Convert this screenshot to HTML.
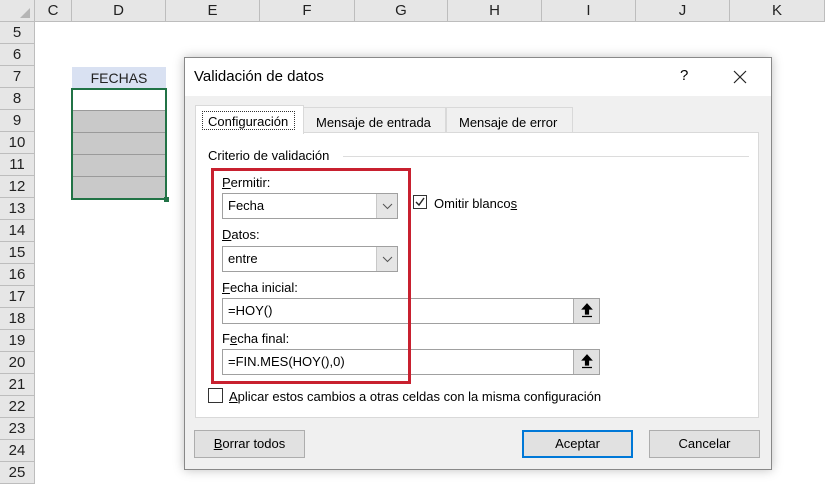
<!DOCTYPE html>
<html><head><meta charset="utf-8"><style>
*{box-sizing:border-box;margin:0;padding:0}
body{width:825px;height:487px;overflow:hidden;background:#fff;font-family:"Liberation Sans",sans-serif;position:relative;font-size:13px;color:#000}
.a{position:absolute}
.ch{position:absolute;top:0;height:22px;background:#e6e6e6;border-right:1px solid #bdbdbd;border-bottom:1px solid #bdbdbd;text-align:center;line-height:22px;font-size:15px;color:#222}
.rh{position:absolute;left:0;width:35px;height:22px;background:#e6e6e6;border-right:1px solid #bdbdbd;border-bottom:1px solid #bdbdbd;text-align:center;line-height:22px;font-size:15px;color:#222}
.lbl{position:absolute;font-size:13px}
u{text-decoration:underline}
.box{position:absolute;background:#fff;border:1px solid #a0a0a0;height:26px;line-height:24px;padding-left:5px}
.dd{position:absolute;right:0;top:0;width:21px;height:24px;background:#e5e5e5;border-left:1px solid #c8c8c8}
.btn{position:absolute;background:#e1e1e1;border:1px solid #adadad;text-align:center;line-height:26px;height:28px;width:111px}
.up{position:absolute;right:0;top:0;width:26px;height:24px;background:#e1e1e1;border-left:1px solid #adadad}
</style></head><body>
<div class="ch" style="left:0;width:35px"></div>
<div class="a" style="left:20px;top:8px;width:0;height:0;border-left:10px solid transparent;border-bottom:10px solid #b5b5b5"></div>
<div class="ch" style="left:35px;width:37px">C</div>
<div class="ch" style="left:72px;width:94px">D</div>
<div class="ch" style="left:166px;width:94px">E</div>
<div class="ch" style="left:260px;width:95px">F</div>
<div class="ch" style="left:355px;width:93px">G</div>
<div class="ch" style="left:448px;width:94px">H</div>
<div class="ch" style="left:542px;width:94px">I</div>
<div class="ch" style="left:636px;width:94px">J</div>
<div class="ch" style="left:730px;width:95px">K</div>
<div class="rh" style="top:22px">5</div><div class="rh" style="top:44px">6</div><div class="rh" style="top:66px">7</div><div class="rh" style="top:88px">8</div><div class="rh" style="top:110px">9</div><div class="rh" style="top:132px">10</div><div class="rh" style="top:154px">11</div><div class="rh" style="top:176px">12</div><div class="rh" style="top:198px">13</div><div class="rh" style="top:220px">14</div><div class="rh" style="top:242px">15</div><div class="rh" style="top:264px">16</div><div class="rh" style="top:286px">17</div><div class="rh" style="top:308px">18</div><div class="rh" style="top:330px">19</div><div class="rh" style="top:352px">20</div><div class="rh" style="top:374px">21</div><div class="rh" style="top:396px">22</div><div class="rh" style="top:418px">23</div><div class="rh" style="top:440px">24</div><div class="rh" style="top:462px">25</div>
<div class="a" style="left:72px;top:67px;width:94px;height:21px;background:#d9e1f2;text-align:center;line-height:22px;font-size:14px;color:#222">FECHAS</div>
<div class="a" style="left:72px;top:111px;width:94px;height:88px;background:#c9c9c9"></div>
<div class="a" style="left:72px;top:132px;width:94px;height:1px;background:#9a9a9a"></div>
<div class="a" style="left:72px;top:154px;width:94px;height:1px;background:#9a9a9a"></div>
<div class="a" style="left:72px;top:176px;width:94px;height:1px;background:#9a9a9a"></div>
<div class="a" style="left:72px;top:110px;width:94px;height:1px;background:#9a9a9a"></div>
<div class="a" style="left:71px;top:88px;width:96px;height:112px;border:2px solid #217346"></div>
<div class="a" style="left:164px;top:197px;width:5px;height:5px;background:#217346"></div>

<div class="a" style="left:184px;top:57px;width:588px;height:413px;background:#f0f0f0;border:1px solid #888;box-shadow:0 0 10px rgba(0,0,0,.25)">
 <div class="a" style="left:0;top:0;width:586px;height:38px;background:#fff"></div>
 <div class="a" style="left:9px;top:10px;font-size:15px">Validación de datos</div>
 <div class="a" style="left:495px;top:9px;font-size:15px">?</div>
 <svg class="a" style="left:548px;top:12px" width="14" height="14"><path d="M1 1L13 13M13 1L1 13" stroke="#222" stroke-width="1.2"/></svg>
 <div class="a" style="left:118px;top:49px;width:143px;height:26px;border:1px solid #d9d9d9;border-bottom:none;background:#f0f0f0;padding:7px 0 0 12px">Mensaje de entrada</div>
 <div class="a" style="left:261px;top:49px;width:127px;height:26px;border:1px solid #d9d9d9;border-bottom:none;background:#f0f0f0;padding:7px 0 0 12px">Mensaje de error</div>
 <div class="a" style="left:10px;top:74px;width:564px;height:286px;background:#fff;border:1px solid #d9d9d9"></div>
 <div class="a" style="left:10px;top:47px;width:109px;height:29px;background:#fff;border:1px solid #d9d9d9;border-bottom:none"></div>
 <div class="a" style="left:17px;top:53px;width:93px;height:19px;border:1px dotted #333;padding:2px 0 0 5px">Configuración</div>
 <div class="a" style="left:23px;top:90px">Criterio de validación</div>
 <div class="a" style="left:158px;top:98px;width:406px;height:1px;background:#dcdcdc"></div>
 <div class="lbl" style="left:37px;top:117px"><u>P</u>ermitir:</div>
 <div class="box" style="left:37px;top:135px;width:176px">Fecha<div class="dd"><svg width="21" height="24"><path d="M6 10l4.5 4.5L15 10" stroke="#555" fill="none"/></svg></div></div>
 <div class="a" style="left:228px;top:137px;width:14px;height:14px;border:1px solid #333;background:#fff"><svg width="12" height="12" style="position:absolute;left:0;top:0"><path d="M2 6l3 3 5-7" stroke="#222" fill="none" stroke-width="1.4"/></svg></div>
 <div class="lbl" style="left:249px;top:138px">Omitir blanco<u>s</u></div>
 <div class="lbl" style="left:37px;top:169px"><u>D</u>atos:</div>
 <div class="box" style="left:37px;top:188px;width:176px">entre<div class="dd"><svg width="21" height="24"><path d="M6 10l4.5 4.5L15 10" stroke="#555" fill="none"/></svg></div></div>
 <div class="lbl" style="left:37px;top:222px"><u>F</u>echa inicial:</div>
 <div class="box" style="left:37px;top:240px;width:378px">=HOY()<div class="up"><svg width="26" height="24"><path d="M13 5L8.5 10H11.5V15H14.5V10H17.5Z M8 17.5H18" fill="#000" stroke="#000" stroke-width="1.2"/></svg></div></div>
 <div class="lbl" style="left:37px;top:273px">F<u>e</u>cha final:</div>
 <div class="box" style="left:37px;top:291px;width:378px">=FIN.MES(HOY(),0)<div class="up"><svg width="26" height="24"><path d="M13 5L8.5 10H11.5V15H14.5V10H17.5Z M8 17.5H18" fill="#000" stroke="#000" stroke-width="1.2"/></svg></div></div>
 <div class="a" style="left:26px;top:110px;width:200px;height:216px;border:3px solid #c8202f"></div>
 <div class="a" style="left:23px;top:330px;width:15px;height:15px;border:1px solid #333;background:#fff"></div>
 <div class="lbl" style="left:44px;top:331px"><u>A</u>plicar estos cambios a otras celdas con la misma configuración</div>
 <div class="btn" style="left:9px;top:372px"><u>B</u>orrar todos</div>
 <div class="btn" style="left:337px;top:372px;border:2px solid #0078d7;line-height:24px">Aceptar</div>
 <div class="btn" style="left:464px;top:372px">Cancelar</div>
</div>
</body></html>
